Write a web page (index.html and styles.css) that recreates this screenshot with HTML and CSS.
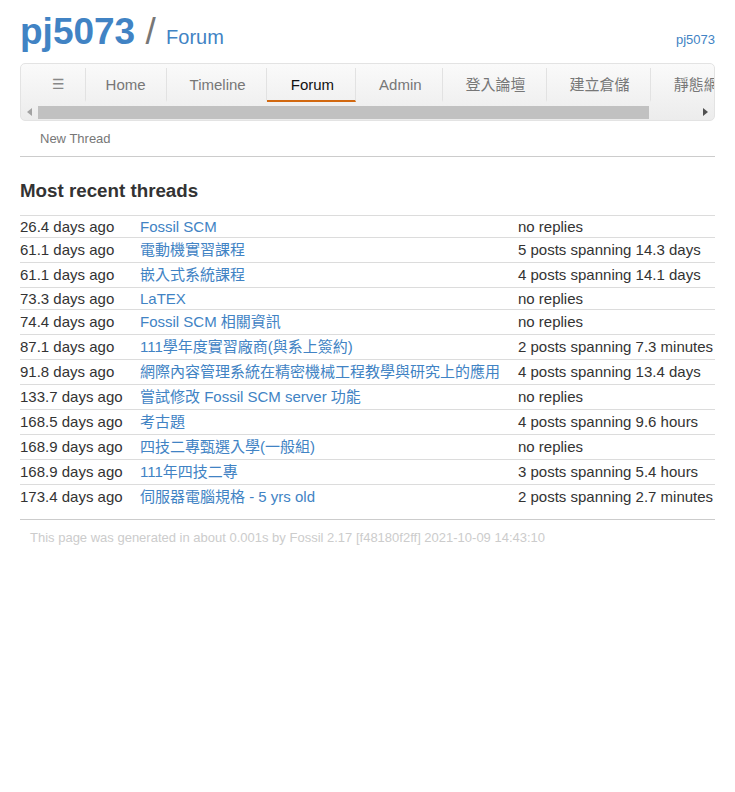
FILE: index.html
```html
<!DOCTYPE html>
<html>
<head>
  <title>pj5073: Forum</title>
  <link rel="stylesheet" href="styles.css">
</head>
<body>
  <div class="header">
    <div class="title">
      <span class="repo">pj5073</span><span class="slash"> / </span><span class="page">Forum</span>
    </div>
    <a class="status" href="#">pj5073</a>
  </div>

  <div class="mainmenu">
    <div class="menu-row">
      <a class="hamburger" href="#">&#9776;</a>
      <a class="first" href="#">Home</a>
      <a href="#">Timeline</a>
      <a class="active" href="#">Forum</a>
      <a href="#">Admin</a>
      <a href="#">登入論壇</a>
      <a href="#">建立倉儲</a>
      <a href="#">靜態網頁</a>
    </div>
    <div class="scrollbar">
      <span class="arrow left">
        <svg width="5" height="8" viewBox="0 0 5 8"><path d="M5 0 L0 4 L5 8 Z" /></svg>
      </span>
      <div class="track"><div class="thumb" style="width: 92.7%"></div></div>
      <span class="arrow right">
        <svg width="5" height="8" viewBox="0 0 5 8"><path d="M0 0 L5 4 L0 8 Z" /></svg>
      </span>
    </div>
  </div>

  <div class="submenu">
    <a href="#">New Thread</a>
  </div>

  <h1>Most recent threads</h1>

  <table class="threads">
    <colgroup>
      <col class="c-age">
      <col class="c-title">
      <col>
    </colgroup>
    <tr><td>26.4 days ago</td><td><a href="#">Fossil SCM</a></td><td>no replies</td></tr>
    <tr class="cjk"><td>61.1 days ago</td><td><a href="#">電動機實習課程</a></td><td>5 posts spanning 14.3 days</td></tr>
    <tr class="cjk"><td>61.1 days ago</td><td><a href="#">嵌入式系統課程</a></td><td>4 posts spanning 14.1 days</td></tr>
    <tr><td>73.3 days ago</td><td><a href="#">LaTEX</a></td><td>no replies</td></tr>
    <tr class="cjk"><td>74.4 days ago</td><td><a href="#">Fossil SCM 相關資訊</a></td><td>no replies</td></tr>
    <tr class="cjk"><td>87.1 days ago</td><td><a href="#">111學年度實習廠商(與系上簽約)</a></td><td>2 posts spanning 7.3 minutes</td></tr>
    <tr class="cjk"><td>91.8 days ago</td><td><a href="#">網際內容管理系統在精密機械工程教學與研究上的應用</a></td><td>4 posts spanning 13.4 days</td></tr>
    <tr class="cjk"><td>133.7 days ago</td><td><a href="#">嘗試修改 Fossil SCM server 功能</a></td><td>no replies</td></tr>
    <tr class="cjk"><td>168.5 days ago</td><td><a href="#">考古題</a></td><td>4 posts spanning 9.6 hours</td></tr>
    <tr class="cjk"><td>168.9 days ago</td><td><a href="#">四技二專甄選入學(一般組)</a></td><td>no replies</td></tr>
    <tr class="cjk"><td>168.9 days ago</td><td><a href="#">111年四技二專</a></td><td>3 posts spanning 5.4 hours</td></tr>
    <tr class="cjk"><td>173.4 days ago</td><td><a href="#">伺服器電腦規格 - 5 yrs old</a></td><td>2 posts spanning 2.7 minutes</td></tr>
  </table>

  <div class="footer">
    This page was generated in about 0.001s by Fossil 2.17 [f48180f2ff] 2021-10-09 14:43:10
  </div>
</body>
</html>
```

FILE: styles.css
```css
body {
  margin: 0;
  padding: 0 20px;
  font-family: "Liberation Sans", "Noto Sans CJK TC", sans-serif;
  font-size: 15px;
  color: #333;
  background-color: white;
}

a {
  color: #4183c4;
  text-decoration: none;
}

.header {
  display: flex;
  justify-content: space-between;
  align-items: baseline;
  padding-top: 11px;
}

.title {
  color: #4183c4;
  line-height: 41px;
}

.repo {
  font-size: 37px;
  font-weight: bold;
}

.slash {
  font-size: 37px;
  color: #777;
  white-space: pre;
}

.page {
  font-size: 20px;
}

.status {
  font-size: 13px;
}

.mainmenu {
  margin-top: 4px;
  border: 1px solid #e3e3e3;
  border-radius: 5px;
  background: linear-gradient(#fafafa, #ececec);
  overflow: hidden;
}

.menu-row {
  display: flex;
  padding-top: 4px;
  white-space: nowrap;
  overflow: hidden;
}

.menu-row a {
  flex: none;
  padding: 8px 20px 7px 23px;
  line-height: 17px;
  color: #777;
  border-right: 1px solid #e2e2e2;
  border-bottom: 2px solid transparent;
}

.menu-row a.hamburger {
  padding-left: 31px;
  padding-right: 20px;
  font-family: "DejaVu Sans", sans-serif;
  font-size: 14px;
  color: #888;
}

.menu-row a.first {
  padding-left: 20px;
}

.menu-row a.active {
  padding-left: 24px;
  padding-right: 21px;
  color: #111;
  border-bottom-color: #d26911;
}

.scrollbar {
  display: flex;
  height: 17px;
  margin-top: 1px;
}

.arrow {
  flex: none;
  width: 17px;
  display: flex;
  align-items: center;
  justify-content: center;
}

.arrow.left svg {
  fill: #a3a3a3;
}

.arrow.right svg {
  fill: #505050;
}

.track {
  flex: 1;
  padding: 3px 0 1px;
}

.thumb {
  height: 13px;
  background-color: #c1c1c1;
}

.submenu {
  padding: 10px;
  border-bottom: 1px solid #ccc;
  font-size: 13px;
  line-height: 15px;
}

.submenu a {
  padding: 0 10px;
  color: #777;
}

h1 {
  font-size: 18.75px;
  line-height: 22px;
  margin: 23px 0 13px;
}

.threads {
  width: 100%;
  border-collapse: collapse;
  table-layout: fixed;
}

.c-age {
  width: 120px;
}

.c-title {
  width: 378px;
}

.threads tr {
  border-top: 1px solid #dcdcdc;
}

.threads td {
  padding: 2px 0;
  line-height: 17px;
  white-space: nowrap;
}

.threads tr.cjk td {
  line-height: 20px;
}

.footer {
  margin-top: 10px;
  border-top: 1px solid #ccc;
  padding: 10px;
  font-size: 13px;
  line-height: 15px;
  color: #ccc;
}
```
